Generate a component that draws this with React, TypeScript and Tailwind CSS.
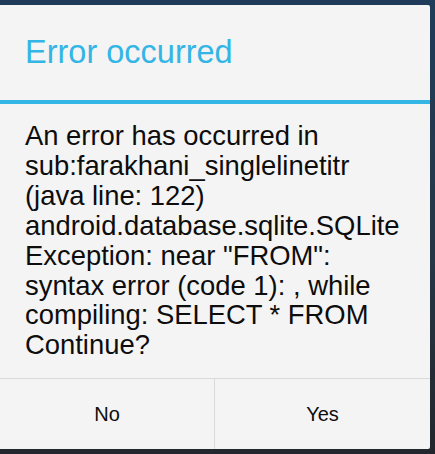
const LINES = [
  "An error has occurred in",
  "sub:farakhani_singlelinetitr",
  "(java line: 122)",
  "android.database.sqlite.SQLite",
  'Exception: near "FROM":',
  "syntax error (code 1): , while",
  "compiling: SELECT * FROM",
  "Continue?",
];

export default function App() {
  return (
    <div
      className="w-[435px] h-[454px] overflow-hidden bg-gradient-to-b from-[#1e3c5a] via-[#253849] to-[#23272d] pt-[5px]"
      style={{ fontFamily: '"Liberation Sans", Arial, sans-serif' }}
    >
      <div className="w-[430px] h-[444px] bg-[#f4f4f4] rounded-r-[2px] flex flex-col">
        {/* Title */}
        <div className="h-[95px] pt-[31px] pl-[25px] text-[32.5px] leading-[32px] text-[#33b5e5]">
          Error occurred
        </div>
        <div className="h-[4px] bg-[#33b5e5]" />

        {/* Message */}
        <div className="flex-1 pt-[17px] pl-[25px] text-[27.4px] leading-[29.9px] text-[#0d0d0d]">
          {LINES.map((l) => (
            <div key={l} className="whitespace-nowrap">
              {l}
            </div>
          ))}
        </div>

        {/* Buttons */}
        <div className="h-[71px] border-t border-[#dadada] grid grid-cols-[215px_1fr] text-[20px] leading-[20px] text-[#0d0d0d]">
          <button className="flex items-center justify-center border-r border-[#dadada]">No</button>
          <button className="flex items-center justify-center">Yes</button>
        </div>
      </div>
    </div>
  );
}
